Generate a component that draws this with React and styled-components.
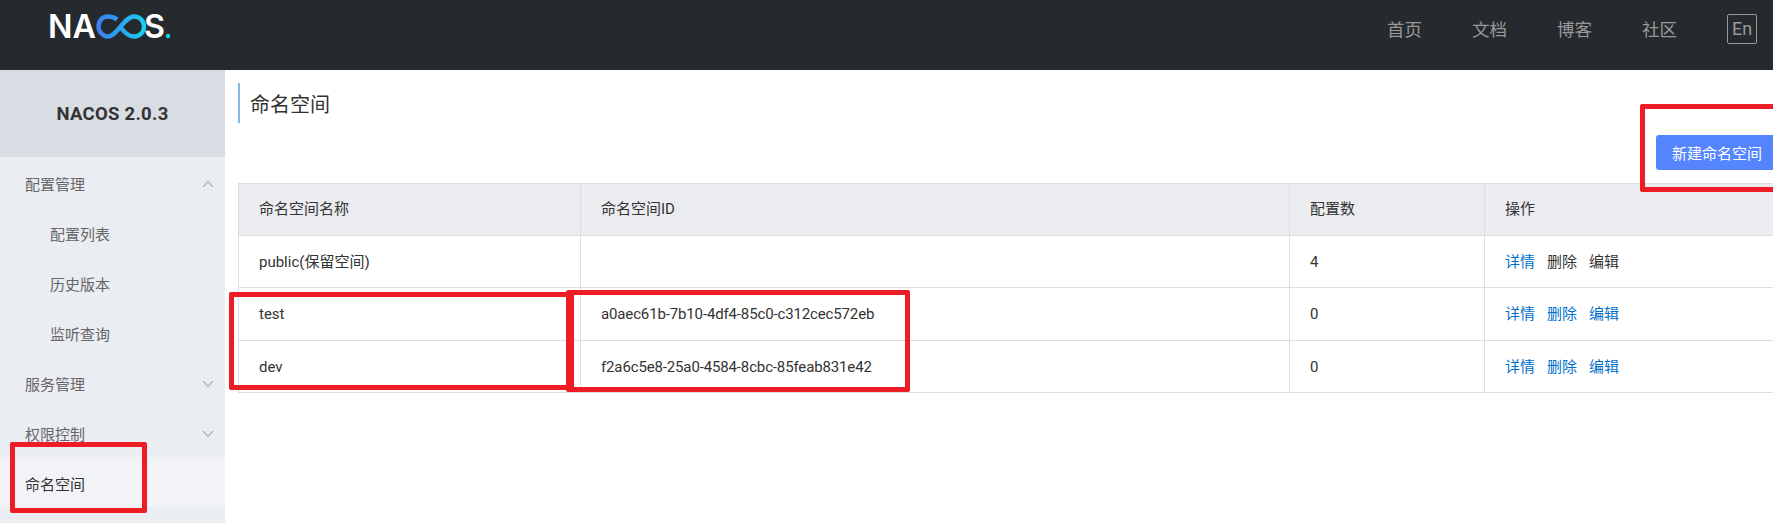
import React from "react";
import styled, { createGlobalStyle } from "styled-components";

const FONT = `Roboto, "Noto Sans CJK SC", sans-serif`;

const GlobalStyle = createGlobalStyle`
  html, body {
    margin: 0;
    padding: 0;
    background: #fff;
    font-family: ${FONT};
    overflow: hidden;
  }
`;

const Page = styled.div`
  position: relative;
  width: 1773px;
  height: 523px;
  overflow: hidden;
`;

const Header = styled.header`
  height: 70px;
  background: #252a2f;
  display: flex;
  justify-content: space-between;
  align-items: flex-start;
  padding: 5px 16px 0 48px;
  box-sizing: border-box;
`;

const Nav = styled.nav`
  display: flex;
  align-items: center;
  gap: 50px;
  margin-top: 8px;
`;

const NavItem = styled.span`
  color: #999;
  font-size: 17.5px;
  line-height: 30px;
  padding-top: 2px;
`;

const LangButton = styled.span`
  width: 30px;
  height: 30px;
  box-sizing: border-box;
  border: 1px solid #999;
  border-radius: 2px;
  color: #999;
  font-size: 18px;
  line-height: 27px;
  text-align: center;
`;

const Body = styled.div`
  display: flex;
  height: 453px;
`;

const Sidebar = styled.aside`
  width: 225px;
  flex: none;
  background: #eaedf1;
`;

const Version = styled.div`
  height: 87px;
  background: #d8dce3;
  color: #333;
  font-size: 18.5px;
  font-weight: 700;
  letter-spacing: 0.3px;
  display: flex;
  align-items: center;
  justify-content: center;
`;

const MenuRow = styled.div`
  height: 50px;
  display: flex;
  align-items: center;
  justify-content: space-between;
  box-sizing: border-box;
  padding: 3px 11px 0 ${(p) => (p.$sub ? 50 : 25)}px;
  color: ${(p) => (p.$active ? "#333" : "#666")};
  background: ${(p) => (p.$active ? "#f2f3f7" : "transparent")};
  font-size: 15px;
`;

const Main = styled.main`
  flex: 1;
  min-width: 0;
  padding: 13px 0 0 13px;
`;

const TitleBar = styled.div`
  height: 40px;
  border-left: 2px solid #88b7e0;
  padding: 2px 0 0 10px;
  box-sizing: border-box;
  color: #333;
  font-size: 20px;
  line-height: 40px;
`;

const Toolbar = styled.div`
  height: 47px;
  display: flex;
  justify-content: flex-end;
  align-items: flex-end;
  margin-bottom: 13px;
`;

const PrimaryButton = styled.button`
  width: 123px;
  height: 35px;
  margin-right: -6px;
  padding: 0 0 0 16px;
  border: 0;
  border-radius: 3px;
  background: #5584ff;
  color: #fff;
  font-family: ${FONT};
  font-size: 15px;
  text-align: left;
`;

const Table = styled.table`
  width: 1540px;
  table-layout: fixed;
  border-collapse: collapse;
  font-size: 15px;
  line-height: 20px;
  color: #333;
`;

const Th = styled.th`
  height: 52px;
  padding: 0 0 1px 20px;
  box-sizing: border-box;
  background: #ebecf0;
  border: 1px solid #dcdee3;
  font-weight: 400;
  text-align: left;
`;

const Td = styled.td`
  height: ${(p) => p.$h || 52}px;
  padding: 0 0 0 20px;
  box-sizing: border-box;
  border: 1px solid #dcdee3;
  letter-spacing: ${(p) => (p.$tight ? "-0.14px" : "normal")};
`;

const ActionLink = styled.a`
  color: ${(p) => (p.$disabled ? "#333" : "#0070cc")};
  margin-right: 12px;
`;

const Mark = styled.div`
  position: absolute;
  left: ${(p) => p.$x}px;
  top: ${(p) => p.$y}px;
  width: ${(p) => p.$w}px;
  height: ${(p) => p.$h}px;
  box-sizing: border-box;
  border: 5px solid #ee1c25;
  border-radius: 2px;
  pointer-events: none;
`;

const Chevron = ({ up }) => (
  <svg width="12" height="8" viewBox="0 0 12 8" fill="none">
    <path
      d={up ? "M1 7 L6 1.5 L11 7" : "M1 1 L6 6.5 L11 1"}
      stroke="#8a8f96"
      strokeWidth="1"
    />
  </svg>
);

const Logo = () => (
  <svg width="124" height="42" viewBox="0 -8 124 42">
    <defs>
      <linearGradient id="inf" gradientUnits="userSpaceOnUse" x1="49" y1="0" x2="98" y2="0">
        <stop offset="0" stopColor="#3c7cf5" />
        <stop offset="1" stopColor="#1bd0ee" />
      </linearGradient>
    </defs>
    <text
      x="0"
      y="25"
      fill="#fff"
      fontFamily="Inter, sans-serif"
      fontSize="32"
      fontWeight="600"
      textLength="48"
      lengthAdjust="spacingAndGlyphs"
    >
      NA
    </text>
    <path
      d="M69 6.5 C66 4 63 3.5 60 3.5 C54 3.5 50.5 8 50.5 13.5 C50.5 19 55 23.5 60 23.5 C69 23.5 76 3.5 86 3.5 C92 3.5 96 8 96 13.5 C96 19 92 23.5 86 23.5 C80 23.5 76.5 19 73.5 15.5"
      fill="none"
      stroke="url(#inf)"
      strokeWidth="4.4"
    />
    <text
      x="96"
      y="25"
      fill="#fff"
      fontFamily="Inter, sans-serif"
      fontSize="32"
      fontWeight="600"
      textLength="21"
      lengthAdjust="spacingAndGlyphs"
    >
      S
    </text>
    <circle cx="120" cy="23" r="2.2" fill="#1bd0ee" />
  </svg>
);

const rows = [
  { name: "public(保留空间)", id: "", count: 4, locked: true, h: 52 },
  { name: "test", id: "a0aec61b-7b10-4df4-85c0-c312cec572eb", count: 0, h: 53 },
  { name: "dev", id: "f2a6c5e8-25a0-4584-8cbc-85feab831e42", count: 0, h: 52 },
];

export default function App() {
  return (
    <Page>
      <GlobalStyle />
      <Header>
        <Logo />
        <Nav>
          <NavItem>首页</NavItem>
          <NavItem>文档</NavItem>
          <NavItem>博客</NavItem>
          <NavItem>社区</NavItem>
          <LangButton>En</LangButton>
        </Nav>
      </Header>
      <Body>
        <Sidebar>
          <Version>NACOS 2.0.3</Version>
          <MenuRow>
            配置管理
            <Chevron up />
          </MenuRow>
          <MenuRow $sub>配置列表</MenuRow>
          <MenuRow $sub>历史版本</MenuRow>
          <MenuRow $sub>监听查询</MenuRow>
          <MenuRow>
            服务管理
            <Chevron />
          </MenuRow>
          <MenuRow>
            权限控制
            <Chevron />
          </MenuRow>
          <MenuRow $active>命名空间</MenuRow>
        </Sidebar>
        <Main>
          <TitleBar>命名空间</TitleBar>
          <Toolbar>
            <PrimaryButton>新建命名空间</PrimaryButton>
          </Toolbar>
          <Table>
            <colgroup>
              <col width="342" />
              <col width="709" />
              <col width="195" />
              <col width="294" />
            </colgroup>
            <thead>
              <tr>
                <Th>命名空间名称</Th>
                <Th>命名空间ID</Th>
                <Th>配置数</Th>
                <Th>操作</Th>
              </tr>
            </thead>
            <tbody>
              {rows.map((r) => (
                <tr key={r.name}>
                  <Td $h={r.h}>{r.name}</Td>
                  <Td $h={r.h} $tight>{r.id}</Td>
                  <Td $h={r.h}>{r.count}</Td>
                  <Td $h={r.h}>
                    <ActionLink>详情</ActionLink>
                    <ActionLink $disabled={r.locked}>删除</ActionLink>
                    <ActionLink $disabled={r.locked}>编辑</ActionLink>
                  </Td>
                </tr>
              ))}
            </tbody>
          </Table>
        </Main>
      </Body>
      <Mark $x={1640} $y={104} $w={145} $h={88} />
      <Mark $x={10} $y={442} $w={137} $h={71} />
      <Mark $x={229} $y={292} $w={345} $h={98} />
      <Mark $x={566} $y={290} $w={344} $h={102} />
    </Page>
  );
}
